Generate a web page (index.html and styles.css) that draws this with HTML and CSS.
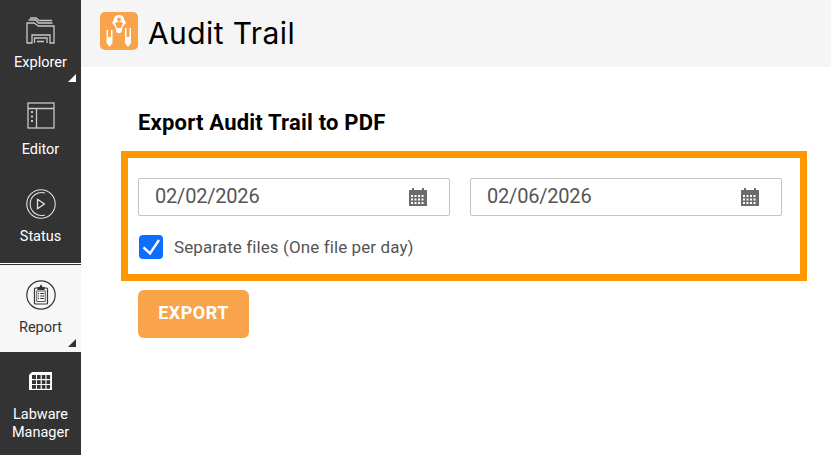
FILE: index.html
```html
<!DOCTYPE html>
<html lang="en">
<head>
    <meta charset="UTF-8">
    <title>Audit Trail</title>
    <link rel="stylesheet" href="styles.css">
</head>
<body>
    <div class="app">
        <nav class="sidebar">
            <div class="nav-item nav-explorer has-menu">
                <svg class="nav-icon" width="29" height="27" viewBox="0 0 29 27" fill="none" stroke="#c8c8c8" stroke-width="1.300">
                    <path d="M1 26V6h7l4.500 3H28v17h-4v-8H6v8z"/>
                    <path d="M8.500 26v-5H21v5M11 24.500h7"/>
                    <path d="M4 1h6l3 2.500h13M2.500 3h7l3 3h14"/>
                </svg>
                <span class="nav-label">Explorer</span>
            </div>
            <div class="nav-item nav-editor">
                <svg class="nav-icon" width="28" height="28" viewBox="0 0 28 28" fill="none" stroke="#c8c8c8" stroke-width="1.300">
                    <rect x="1" y="1" width="26" height="25"/>
                    <path d="M1 6.500h26M9.500 6.500V26"/>
                    <path d="M4 10h2M4 14.500h2M4 19h2" stroke-width="2"/>
                </svg>
                <span class="nav-label">Editor</span>
            </div>
            <div class="nav-item nav-status">
                <svg class="nav-icon" width="30" height="30" viewBox="0 0 30 30" fill="none" stroke="#e0e0e0" stroke-width="1.100">
                    <circle cx="15" cy="15" r="14.200"/>
                    <path d="M19 4A11.500 11.500 0 1 0 19 26"/>
                    <path d="M11.500 10.200l7 4.800-7 4.800z" stroke-linejoin="round" stroke-width="1.300"/>
                </svg>
                <span class="nav-label">Status</span>
            </div>
            <div class="nav-sep"></div>
            <div class="nav-item nav-report active has-menu">
                <svg class="nav-icon" width="30" height="30" viewBox="0 0 30 30" fill="none" stroke="#333" stroke-width="1.200">
                    <circle cx="15" cy="15" r="14.200"/>
                    <rect x="8.500" y="8" width="13" height="16" rx="1"/>
                    <path d="M12 9.500V7.500h1.800l1.200-2 1.200 2H18v2z" fill="#333"/>
                    <rect x="10.800" y="11" width="8.400" height="10.500" stroke-width="0.800"/>
                    <path d="M12 13.500h1M14.200 13.500h3.800M12 16h1M14.200 16h3.800M12 18.500h1M14.200 18.500h3.800" stroke-width="1.100"/>
                </svg>
                <span class="nav-label">Report</span>
            </div>
            <div class="nav-item nav-labware">
                <svg class="nav-icon" width="25" height="20" viewBox="0 0 25 20">
                    <path d="M4 1h20v18H1V4z" fill="#fff"/>
                    <g fill="#333">
                        <rect x="4" y="4" width="4" height="4"/><rect x="9" y="4" width="3.600" height="4"/><rect x="13.800" y="4" width="3.600" height="4"/><rect x="18.500" y="4" width="3.600" height="4"/>
                        <rect x="4" y="9.200" width="4" height="3.800"/><rect x="9" y="9.200" width="3.600" height="3.800"/><rect x="13.800" y="9.200" width="3.600" height="3.800"/><rect x="18.500" y="9.200" width="3.600" height="3.800"/>
                        <rect x="4" y="14" width="4" height="3.800"/><rect x="9" y="14" width="3.600" height="3.800"/><rect x="13.800" y="14" width="3.600" height="3.800"/><rect x="18.500" y="14" width="3.600" height="3.800"/>
                    </g>
                </svg>
                <span class="nav-label">Labware<br>Manager</span>
            </div>
        </nav>
        <div class="main">
            <header class="topbar">
                <svg class="logo" width="38" height="38" viewBox="0 0 38 38">
                    <rect width="38" height="38" rx="5" fill="#f9a34a"/>
                    <path d="M19 3c3 0 5 2 5 4l2 4-3 3-1.500 6c-.5 1.500-4.500 1.500-5 0L15 14l-3-3 2-4c0-2 2-4 5-4z" fill="#fff"/>
                    <circle cx="19" cy="7.500" r="2" fill="#f9a34a"/>
                    <path d="M15 11l4-1.500 4 1.500-2 5h-4z" fill="#f9a34a"/>
                    <path d="M6.500 18H8v7h3v-7h1.500v13L9.500 35l-3-4zM25 16h1.500v9h3v-9H31v15l-3 4-3-4z" fill="#fff"/>
                </svg>
                <h1 class="page-title">Audit Trail</h1>
            </header>
            <section class="content">
                <h2 class="section-title">Export Audit Trail to PDF</h2>
                <div class="export-box">
                    <div class="date-row">
                        <div class="date-input">
                            <span>02/02/2026</span>
                            <svg width="18" height="18" viewBox="0 0 18 18"><use href="#cal"/></svg>
                        </div>
                        <div class="date-input">
                            <span>02/06/2026</span>
                            <svg width="18" height="18" viewBox="0 0 18 18"><use href="#cal"/></svg>
                        </div>
                    </div>
                    <label class="check-row">
                        <span class="checkbox">
                            <svg width="24" height="24" viewBox="0 0 24 24" fill="none" stroke="#fff" stroke-width="2.400"><path d="M4.500 12.300l6.500 6L20 5"/></svg>
                        </span>
                        Separate files (One file per day)
                    </label>
                </div>
                <button class="btn-export">EXPORT</button>
            </section>
        </div>
    </div>
    <svg width="0" height="0" class="defs">
        <symbol id="cal" viewBox="0 0 18 18">
            <path fill="#6b6b6b" fill-rule="evenodd" d="M0 2h3V0h2v2h8V0h2v2h3v16H0zM2 7v2h2V7zm3.500 0v2h2V7zm3.500 0v2h2V7zm3.500 0v2h2V7zM2 10.500v2h2v-2zm3.500 0v2h2v-2zm3.500 0v2h2v-2zm3.500 0v2h2v-2zM2 14v2h2v-2zm3.500 0v2h2v-2zm3.500 0v2h2v-2zm3.500 0v2h2v-2z"/>
        </symbol>
    </svg>
</body>
</html>
```

FILE: styles.css
```css
body {
    margin: 0;
    font-family: Roboto, sans-serif;
    background: #fff;
    color: #000;
    overflow: hidden;
}
.app {
    display: flex;
    height: 455px;
}
.defs { display: block; }

/* left nav */
.sidebar {
    width: 81px;
    flex-shrink: 0;
    background: #333;
    display: flex;
    flex-direction: column;
    color: #fff;
}
.nav-item {
    position: relative;
    height: 88px;
    display: flex;
    flex-direction: column;
    align-items: center;
    box-sizing: border-box;
    padding-top: 14px;
}
.nav-icon { display: block; }
.nav-label {
    font-size: 14.5px;
    line-height: 18px;
    text-align: center;
    margin-top: 9px;
}
.nav-explorer { padding-top: 17px; }
.nav-explorer .nav-label { margin-top: 10px; }
.nav-editor { height: 87px; }
.nav-editor .nav-label { margin-top: 11px; }
.nav-sep {
    height: 1px;
    background: #fff;
    margin-bottom: 1px;
}
.nav-report {
    height: 87px;
    padding-top: 15px;
}
.nav-item.active {
    background: #f7f7f7;
    color: #333;
}
.nav-labware {
    flex: 1;
    padding-top: 19px;
}
.nav-labware .nav-label { margin-top: 15px; }
.has-menu::after {
    content: "";
    position: absolute;
    right: 5px;
    bottom: 6px;
    border-left: 8px solid transparent;
    border-bottom: 8px solid #fff;
}
.active.has-menu::after {
    bottom: 5px;
    border-bottom-color: #333;
}

/* header */
.main {
    flex: 1;
    min-width: 0;
}
.topbar {
    height: 67px;
    background: #f5f5f5;
    display: flex;
    align-items: flex-start;
    box-sizing: border-box;
    padding: 12px 0 0 19px;
    gap: 10px;
}
.page-title {
    margin: 0;
    font-family: Inter, sans-serif;
    font-size: 30px;
    line-height: 42px;
    font-weight: 400;
    letter-spacing: 0.4px;
}

/* form */
.content { padding: 44px 0 0 40px; }
.section-title {
    margin: 0 0 16px 17px;
    font-size: 22px;
    line-height: 24px;
    font-weight: 700;
    letter-spacing: 0.2px;
}
.export-box {
    width: 652px;
    height: 96px;
    border: 7px solid #ff9800;
    padding: 20px 10px 0;
}
.date-row {
    display: flex;
    gap: 20px;
}
.date-input {
    width: 312px;
    height: 38px;
    box-sizing: border-box;
    border: 1px solid #c4c4c4;
    border-radius: 2px;
    display: flex;
    align-items: center;
    justify-content: space-between;
    padding: 0 22px 0 16px;
    font-size: 20px;
    color: #555;
    letter-spacing: -0.2px;
}
.date-input span { margin-top: -2px; }
.check-row {
    display: flex;
    align-items: center;
    gap: 11px;
    margin: 19px 0 0 1px;
    font-size: 17px;
    letter-spacing: 0.1px;
    color: #555;
}
.checkbox {
    width: 24px;
    height: 24px;
    background: #0d6efd;
    border-radius: 4px;
    display: block;
}
.checkbox svg { display: block; }
.btn-export {
    display: block;
    margin: 9px 0 0 17px;
    width: 111px;
    height: 48px;
    background: #f9a34a;
    color: #fff;
    border: none;
    border-radius: 6px;
    font-family: Roboto, sans-serif;
    font-size: 18px;
    font-weight: 700;
    letter-spacing: 0.5px;
    padding: 0 0 4px;
}
```
